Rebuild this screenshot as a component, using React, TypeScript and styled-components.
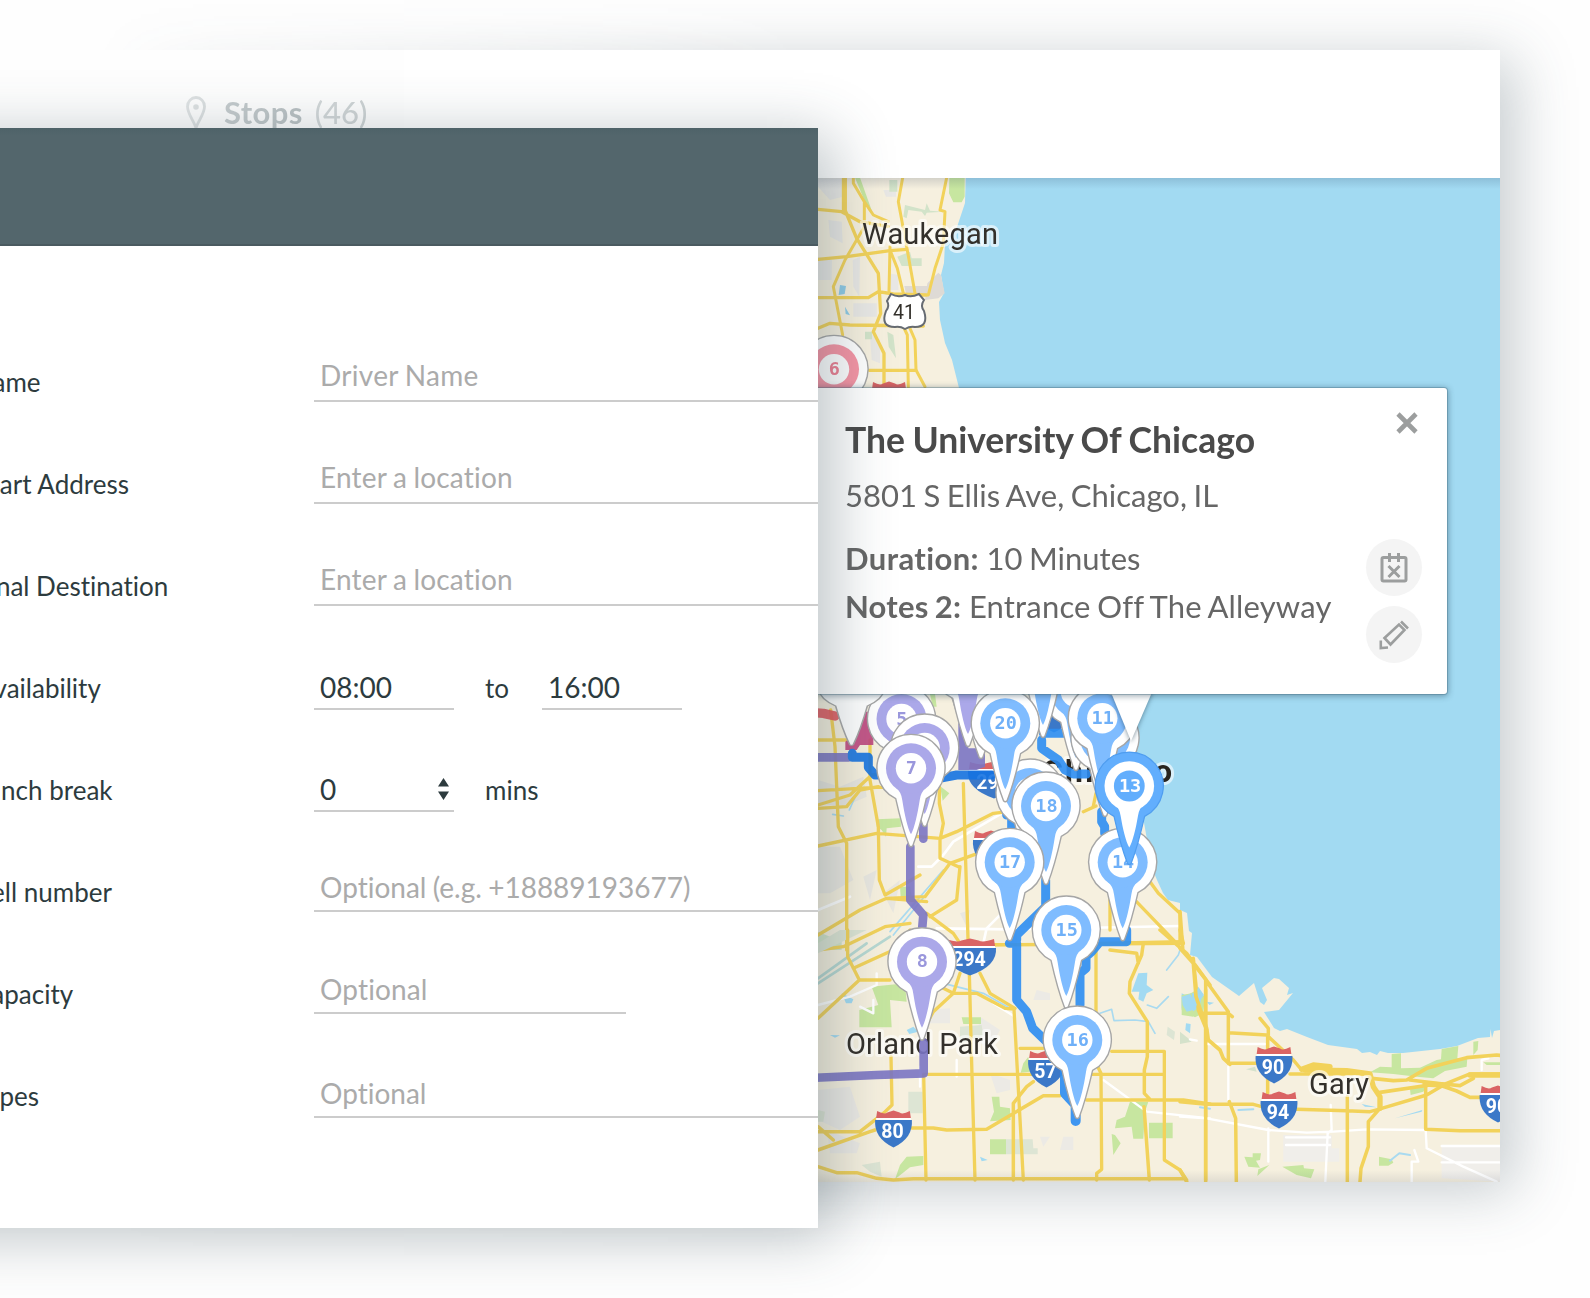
import React from "react";
import styled, { createGlobalStyle, css } from "styled-components";

const GlobalStyle = createGlobalStyle`
  * { box-sizing: border-box; }
  html, body { margin: 0; padding: 0; background: #fefefe; }
  body {
    font-family: Lato, "Liberation Sans", sans-serif;
    font-variant-ligatures: none;
    overflow: hidden;
  }
`;

const Stage = styled.main`
  display: grid;
  width: 1590px;
  height: 1298px;
  overflow: hidden;
  background: #fefefe;
`;

const BackLayer = styled.section`
  grid-area: 1 / 1;
  display: flex;
  width: 1590px;
  padding: 50px 90px 116px;
  mask-image: linear-gradient(to right, transparent 90px, rgba(0, 0, 0, 0.3) 215px, rgba(0, 0, 0, 0.42) 340px, #000 800px);
`;

const RouteCard = styled.div`
  flex: 1;
  display: flex;
  flex-direction: column;
  background: #fff;
  box-shadow: 15px 9px 56px rgba(55, 75, 85, 0.28);
`;

const CardHeader = styled.header`
  display: flex;
  align-items: center;
  height: 128px;
  padding: 0 0 5px 96px;
`;

const StopsTitle = styled.div`
  display: flex;
  align-items: center;
  font-size: 31px;
  color: #4c6066;
  svg { margin-top: 2px; }
  strong { font-weight: 700; letter-spacing: 0.4px; margin: 0 12px 0 18px; }
  span { opacity: 0.6; font-weight: 500; }
`;

const MapArea = styled.div`
  position: relative;
  flex: 1;
  svg.map { display: block; width: 1410px; height: 1004px; }
`;

const Popup = styled.article`
  position: absolute;
  left: 700px;
  top: 210px;
  width: 657px;
  height: 306px;
  display: flex;
  padding: 0 25px 0 55px;
  background: #fff;
  border-radius: 3px;
  box-shadow: 0 0 0 1px rgba(70, 110, 130, 0.35), 0 1px 6px 1px rgba(30, 60, 80, 0.45);
`;

const PopupText = styled.div`
  flex: 1;
  padding-top: 30px;
  white-space: nowrap;
`;

const PopupTitle = styled.h2`
  margin: 0;
  font-size: 35.5px;
  line-height: 44px;
  font-weight: 700;
  word-spacing: -1.2px;
  color: #4a4a4a;
`;

const PopupLine = styled.p<{ $gap: number; $track?: number }>`
  margin: ${(p) => p.$gap}px 0 0;
  font-size: 31px;
  line-height: 38px;
  letter-spacing: ${(p) => p.$track ?? 0}px;
  word-spacing: -1.4px;
  color: #666;
`;

const Term = styled.strong<{ $track: number }>`
  font-weight: 700;
  letter-spacing: ${(p) => p.$track}px;
  margin-right: 1px;
`;

const PopupActions = styled.div`
  display: flex;
  flex-direction: column;
  align-items: center;
  width: 56px;
`;

const CloseButton = styled.button`
  display: grid;
  place-items: center;
  width: 30px;
  height: 30px;
  margin: 20px 0 101px 26px;
  padding: 0;
  border: 0;
  background: none;
`;

const RoundButton = styled.button`
  display: grid;
  place-items: center;
  width: 56px;
  height: 57px;
  flex: none;
  margin-bottom: 10px;
  padding: 0;
  border: 0;
  border-radius: 50%;
  background: #f4f4f4;
`;

const Dialog = styled.section`
  grid-area: 1 / 1;
  z-index: 1;
  width: 938px;
  height: 1100px;
  margin: 128px 0 0 -120px;
  background: #fff;
  box-shadow: 15px 8px 58px rgba(55, 75, 85, 0.33);
`;

const DialogHeader = styled.header`
  height: 118px;
  background: linear-gradient(#4e6268, #53666c 8px);
  border-bottom: 2px solid #4a5a60;
`;

const Form = styled.form`
  padding: 54px 0 0 120px;
`;

const Row = styled.div`
  display: flex;
  align-items: flex-end;
  height: 102px;
  color: #2d3b3e;
`;

const Label = styled.label<{ $shift?: number }>`
  flex: none;
  width: ${(p) => 314 + (p.$shift ?? 26)}px;
  margin-left: ${(p) => -(p.$shift ?? 26)}px;
  margin-bottom: 4px;
  font-size: 26px;
  line-height: 32px;
  white-space: nowrap;
`;

const Field = styled.div<{ $width?: number; $pad: number; $drop?: boolean; $filled?: boolean; $track?: number }>`
  display: flex;
  align-items: center;
  justify-content: space-between;
  ${(p) => (p.$width ? css`width: ${p.$width}px;` : css`flex: 1;`)}
  margin-bottom: ${(p) => (p.$drop ? -2 : 0)}px;
  padding: 0 5px ${(p) => p.$pad}px 6px;
  border-bottom: 2px solid #ccc;
  font-size: 28px;
  line-height: 34px;
  letter-spacing: ${(p) => p.$track ?? 0}px;
  word-spacing: -0.9px;
  color: ${(p) => (p.$filled ? "#2d3b3e" : "#ababab")};
`;

const Unit = styled.span`
  width: 88px;
  padding-left: 31px;
  margin-bottom: 4px;
  font-size: 26px;
  line-height: 32px;
`;

const road = { fill: "none", strokeLinejoin: "round" as const, strokeLinecap: "round" as const };
const YELLOW = "#f2d25a";

function Roads({ d, w = 10, color = YELLOW }: { d: string; w?: number; color?: string }) {
  return <path {...road} d={d} strokeWidth={w} stroke={color} />;
}

const PIN_OUTLINE =
  "M-15.3 30.4 A34 34 0 1 1 15.3 30.4 C12 45 7 64 1.8 77.5 Q0 79.5 -1.8 77.5 C-7 64 -12 45 -15.3 30.4Z";
const STEM = "M-15 19.5 Q-9.5 24 -8.7 32 C-6.5 46 -3.5 60 0 66 C3.5 60 6.5 46 8.7 32 Q9.5 24 15 19.5Z";

type PinProps = { x: number; y: number; label?: string; tone?: "blue" | "purple" | "pink" | "white" };
const TONES = { blue: "#7fbcff", purple: "#aba8e9", pink: "#f795a5", white: "#fff" };
const INK = { blue: "#6fb0f8", purple: "#9a97dc", pink: "#ee7f92", white: "#fff" };

const PinText = styled.text`
  font: 700 18.5px "DejaVu Sans Mono", monospace;
  text-anchor: middle;
`;

function Pin({ x, y, label, tone = "blue" }: PinProps) {
  return (
    <g transform={`translate(${x} ${y})`}>
      <path d={PIN_OUTLINE} fill="#fff" stroke="#a6a6a6" strokeWidth="1.4" />
      <path d={STEM} fill={TONES[tone]} />
      <circle r="25" fill={TONES[tone]} />
      <circle r="15.2" fill="#fff" />
      {label && <PinText x=".4" y="5.5" fill={INK[tone]}>{label}</PinText>}
    </g>
  );
}

function ActivePin({ x, y, label }: PinProps) {
  return (
    <g transform={`translate(${x} ${y})`}>
      <path d={PIN_OUTLINE} fill="#62aefd" stroke="#4f9df0" strokeWidth="1.2" />
      <path d={STEM} fill="#fff" transform="scale(1 .93)" />
      <circle r="24.8" fill="#fff" />
      <circle r="15.4" fill="#62aefd" />
      <PinText x=".8" y="5.5" fill="#fff">{label}</PinText>
    </g>
  );
}

const ShieldText = styled.text`
  font: 700 19.5px Roboto, sans-serif;
  text-anchor: middle;
  fill: #fff;
`;

function Interstate({ x, y, label, w = 36.7 }: { x: number; y: number; label: string; w?: number }) {
  const h = w / 2;
  return (
    <g transform={`translate(${x} ${y})`}>
      <path
        d={`M${-h + 2} -18 Q${-h / 2} -14 ${-h / 3} -16.5 L0 -18.5 L${h / 3} -16.5 Q${h / 2} -14 ${h - 2} -18 L${h - 1} -11 H${-h + 1}Z`}
        fill="#da6464"
      />
      <path d={`M${-h} -9 H${h} Q${h + 1.5} 9 0 18.5 Q${-h - 1.5} 9 ${-h} -9Z`} fill="#3b78c8" />
      <path d={`M${-h + 1} -10 H${h - 1}`} stroke="#fff" strokeWidth="2" />
      {label && <ShieldText x="-1" y="9">{label}</ShieldText>}
    </g>
  );
}

const Place = styled.text`
  font: 400 29px Roboto, sans-serif;
  fill: #33302b;
  stroke: rgba(255, 255, 255, 0.6);
  stroke-width: 6px;
  stroke-linejoin: round;
  paint-order: stroke;
`;

const Pointer = styled.path`
  fill: #fff;
  filter: drop-shadow(0 1px 2.5px rgba(40, 70, 90, 0.6));
`;

function MapDrawing() {
  return (
    <svg className="map" viewBox="90 178 1410 1004">
      <defs>
        <linearGradient id="topShade" x1="0" y1="0" x2="0" y2="1">
          <stop offset="0" stopColor="#235" stopOpacity=".16" />
          <stop offset="1" stopColor="#235" stopOpacity="0" />
        </linearGradient>
        <linearGradient id="bottomShade" x1="0" y1="1" x2="0" y2="0">
          <stop offset="0" stopColor="#235" stopOpacity=".1" />
          <stop offset="1" stopColor="#235" stopOpacity="0" />
        </linearGradient>
      </defs>
      <rect x="90" y="178" width="1410" height="1004" fill="#a2daf2" />
      <path
        fill="#f6f0df"
        d="M700 178 H965.7 L965 203 L957 227 L945 243 L944 263 L941 275 L944 293 L939 302 L940 320 L945 343 L952 360 L959 388 L1000 480 L1050 560 L1090 640 L1115 694 L1125 740 L1140 800 L1152 868 L1157 880 L1163 893 L1168 900 L1180 903 L1180 910 L1187 913 L1189 931 L1192 933 L1190 955 L1197 957 L1212 977 L1239 996 L1254 983 L1260 1002 L1264 1005 L1267 1000 L1262 988 L1274 978 L1279 979 L1289 988 L1287 995 L1293 993 L1279 1010 L1264 1012 L1274 1028 L1280 1031 L1287 1029 L1307 1037 L1328 1045 L1357 1049 L1362 1053 L1370 1052 L1377 1055 L1380 1051 L1388 1053 L1403 1053 L1440 1049 L1457 1046 L1478 1038 L1490 1037 L1490.5 1029 L1492 1038 L1494 1031 L1500 1030 V1182 H700Z"
      />

      {/* Waukegan and the north shore */}
      <g transform="translate(810 30) scale(.33333)">
        <path fill="#e9e8e5" d="M24 445H98V500L60 510L24 470ZM55 570L95 575L98 640L60 620ZM24 680L66 690L65 750H24ZM128 690L150 680L148 800L130 770ZM130 820H200V860H130ZM235 730L265 735V780H240ZM220 480H258V500H228ZM180 910L210 930V1000L185 990Z" />
        <path fill="#d2e3c9" d="M238 450H262V485H238ZM262 680L300 665L305 685H335V708H275ZM232 905L250 915L258 985L236 950ZM165 905H186V928H165ZM285 525L345 540L350 520L360 542L400 545L350 548L345 558L335 545L295 540L290 565L280 560Z" />
        <path fill="#c7e6a0" d="M135 443H150L190 555L175 540ZM418 443H464V500L455 517H430L417 490Z" />
        <path fill="#dedad5" d="M283 768H352V800H290ZM352 760L385 728L393 735L404 790L385 805L345 810Z" />
        <path fill="#8fcbe6" d="M90 765L108 768L104 792L86 795ZM105 830L120 856L107 852Z" />
        <Roads d="M24 538L95 545L150 575L235 590M24 688L110 680L240 662L290 658M24 803H175L205 785L250 792L350 795M24 895L60 880L120 885L340 888M178 1021H318M105 443V540L140 625L205 730L212 850L190 905L222 970V1073" />
        <Roads d="M130 443V460L163 515L190 555L235 575M163 515V590L105 690L70 770L98 915M278 443L265 515L290 650L315 790M410 443L390 540L405 545L400 640L375 715L355 795M240 650L237 785M240 660L262 715L280 790M278 885L292 915L295 1073M300 895L315 930L318 1020L345 1070" w={9} />
        <Roads d="M103 443V545" w={15} />
      </g>

      {/* western and central suburbs */}
      <g transform="translate(810 680) scale(.33333)">
        <path fill="#e9e7e0" d="M24 300L90 320L160 290L170 350L100 380L24 370ZM24 500L90 500L130 600L60 640H24ZM160 590L200 570L180 660ZM220 640L270 600L250 700ZM450 700L480 690L470 740Z" />
        <path fill="#c7e6a0" d="M360 42H375L380 80H368ZM200 418L272 415L273 440L230 445L228 470L215 450L200 440ZM390 318L418 340L398 362ZM270 620H300L305 650H272Z" />
        <path fill="#d2e3c9" d="M24 755L60 770L95 770V810H24Z" />
        <Roads color="#fff" w={8} d="M325 560H365L400 525L430 485L575 400M380 745L600 748L1110 738M520 790L530 745L575 700M24 690L120 650" />
        <Roads color="#a9daf0" w={5} d="M250 765L415 560M240 755L400 570M118 390L140 340M68 403L100 408" />
        <Roads d="M24 180H120M62 90L75 200L85 440L110 490V810M24 498L200 460L390 475L440 455L550 400L680 385M820 395L858 378M24 375L120 345L185 285L300 270M24 332L200 322H300M24 385L110 380L150 330L205 320M180 180V300L205 440L208 600L225 645L330 585M388 300V370L400 430L390 480V535L445 560M460 310L465 480L475 810" />
        <Roads d="M24 765L150 690L230 655L345 650L420 550L560 500M230 655L350 665M360 710L440 660L450 560M24 810L100 800L225 740L300 730M350 700L430 760L450 790M300 42V80M858 340L850 378M900 655V750M970 655L1100 790M1020 605L1045 640L1110 700V790M480 795L1120 790" />
      </g>

      {/* southern suburbs */}
      <g transform="translate(810 930) scale(.33333)">
        <path fill="#eceae5" d="M24 480L120 470L150 560L90 600L24 570ZM50 600L150 640L140 670H60ZM350 240L420 235V280H350ZM510 260L570 300L540 360L500 330ZM540 430L600 450V480L560 490ZM680 180L720 190V210H670ZM690 620H720L700 650ZM760 620H790V660H750Z" />
        <path fill="#c7e6a0" d="M185 170L285 160L290 215L240 210L245 292H148V240L205 225ZM455 262H513V282H460ZM255 748L270 705L290 680L340 678L340 705L300 712ZM540 628H588V673H540ZM545 500H568L570 530L600 535L602 570L540 574L552 545ZM915 595L920 570L945 560L960 515H1015L1005 545L1000 626H970L965 590ZM1017 578H1088V625H1017ZM905 612L915 615L932 640L910 675ZM640 400L655 380L660 425L632 428Z" />
        <path fill="#dde5d4" d="M24 70L170 0H90L24 40ZM450 290L515 285L520 320L450 340ZM295 485H338V550H295ZM588 628H668L670 655H683V673H588ZM24 540L45 545L40 575L24 575ZM1073 290L1095 305L1092 330L1070 315ZM1115 310L1135 325L1138 335L1112 335ZM155 705L210 695L215 740L180 725Z" />
        <path fill="#a2daf2" d="M985 130L1012 128L1010 165L1030 180L1010 190L1000 215L985 208L988 185L965 185ZM95 190L130 208L125 220L108 220ZM60 315L90 316L75 323ZM290 300L310 290L325 305L298 312ZM510 680L533 690L515 694Z" />
        <path fill="#c7e6a0" d="M1115 205L1160 180L1185 200L1180 250L1155 262L1115 240Z" />
        <path fill="#a2daf2" d="M1115 190L1135 200L1145 190L1178 190L1168 230L1135 255L1115 235Z" />
        <Roads color="#b7d8d2" w={8} d="M24 145L170 40M24 160L240 20" />
        <Roads color="#a9daf0" w={5} d="M870 250L905 238L912 272L975 270L1015 275L1035 310M1012 225L1040 235L1075 200M1070 120L1105 75L1110 60M400 160L520 190L600 235" />
        <Roads color="#fff" w={7} d="M24 225L120 200L200 165V130M150 230L190 250V210M550 220L615 260M880 450L1010 545L1200 565M440 440V390M330 470V410" />
        <Roads d="M113 0V80L148 150H240M24 265L148 150M130 115L250 60L300 0M555 44H700L1115 35M478 130L485 400L495 750M510 130L540 190L615 235M400 175L430 190L500 190L585 235L612 237L640 750M430 190L370 245L340 300M430 190L450 130M345 433H1060M630 355H700M905 364H1063V690L1110 720L1130 750M858 45V400L873 430L875 718L860 730V750M341 433L348 750M243 380L246 525L220 550" />
        <Roads d="M24 590L70 630M24 605H150L220 550M24 660L180 605L195 600M305 594H370L410 600L530 598L700 497H750M830 510H1120L1200 522M610 750V520L650 470L670 455M24 710L80 728H140L200 745L250 750L310 746H1120M1002 530L1018 750M1000 40L995 75L960 155L958 190L1012 275V380L1003 420V490L1020 508M900 60L980 70L985 100M1110 0L1120 40M1050 0L1130 70L1200 165M1150 85L1165 240L1190 300M1187 180V750" w={10.5} />
      </g>

      {/* Gary and the Indiana shore */}
      <g transform="translate(1180 900) scale(.33333)">
        <path fill="#c7e6a0" d="M570 517L600 500L635 502V462L663 460V505L720 503L770 480L783 478L785 447L835 438L832 475L862 473L860 500L795 513L760 535L710 530L640 522ZM880 425L895 423L893 450L880 465ZM690 568L740 558L730 575L692 585ZM5 285L35 280L40 350L5 345ZM193 770L218 772V760H243L240 780L228 782L240 803L205 800ZM232 828L235 808L268 795ZM307 800L370 795L372 805L403 808L393 835L350 825ZM597 770L635 778L640 788L625 797H597ZM910 487H960V495H920Z" />
        <path fill="#d5e2cb" d="M0 395L35 425L0 432ZM198 508L225 500L230 515Z" />
        <path fill="#f0eeea" d="M310 705H455V745H478V785H310ZM785 735H960V845L785 835Z" />
        <path fill="#a2daf2" d="M5 290L30 282L40 300L55 260L72 285L40 330L20 335L8 315ZM18 370L32 372L30 400L16 390ZM80 305L102 308L88 315ZM545 612L590 622L555 620ZM645 655L727 630L725 635Z" />
        <Roads color="#a9daf0" w={6} d="M630 782L658 760L690 765M60 622L90 626M175 630L220 628" />
        <Roads color="#fff" w={7} d="M0 650L80 655L265 690L380 698L460 695L560 688L737 690L740 745L850 800L950 845M265 685V785M452 615L455 690L443 700L436 845M145 500V600M83 432H255M695 845V785H715L703 750M785 738H960M785 787H960M318 712H450M318 735H450M905 510V480L925 475M30 418L50 422" />
        <Roads d="M77 240V845M0 605L80 613H220L245 620M350 628L500 632L570 635L595 628L740 585L800 550L870 522H960M62 340H145L157 350M80 245L145 335V490H230M145 398L260 405L340 480L365 510M330 522H570M263 405V580M240 355L265 385V405M148 605L167 655L169 845M502 590V845M600 625L565 665V740L543 805L540 845M737 555V688L840 692H960" w={10.5} />
        <Roads d="M0 145L40 190L78 240M0 35L8 145M40 190L48 290L80 385L85 420L120 450L130 475L150 493M0 810L20 845M575 535L640 542L680 540L740 505L860 473L950 465L960 466M600 577L770 552L830 573L870 592H900M690 540L790 552L840 557L880 535" w={11} />
        <Roads d="M365 508L400 495L450 500L375 510L500 512L570 522L580 560L600 590L600 625M735 552L790 555M870 525H960" w={16} />
      </g>

      <Place x="862" y="243.5" textLength="136">Waukegan</Place>
      <Place x="846" y="1054" textLength="152">Orland Park</Place>
      <Place x="1309" y="1094" textLength="60">Gary</Place>
      <text x="1042" y="782" textLength="130" fontFamily="Roboto" fontWeight="700" fontSize="32" fill="#28241e" stroke="#fff" strokeOpacity=".6" strokeWidth="6" paintOrder="stroke" strokeLinejoin="round">Chicago</text>

      <path d="M891 294 L887 301 Q890 306 886 311 Q880 327 895 327 Q900 326 905 329 Q910 326 915 327 Q929 327 924 311 Q920 306 924 300 L919 294 Q911 298 905 295 Q898 298 891 294Z" fill="#fff" stroke="#666b72" strokeWidth="2" />
      <text x="904" y="319" textAnchor="middle" fontFamily="Roboto" fontWeight="400" fontSize="19.5" fill="#33302b">41</text>

      <Interstate x={889} y={400} label="" w={36} />
      <Interstate x={994} y={780} label="294" w={52} />
      <Interstate x={991} y={849} label="" w={36} />
      <Interstate x={970} y={957} label="294" w={52} />
      <Interstate x={1054} y={714} label="" w={40} />
      <Interstate x={1046.5} y={1069} label="57" />
      <Interstate x={893.5} y={1129} label="80" />
      <Interstate x={1274} y={1065} label="90" />
      <Interstate x={1279} y={1110} label="94" />
      <Interstate x={1498} y={1104} label="90" />

      {/* planned routes */}
      <g transform="translate(810 680) scale(.33333)" opacity=".9">
        <Roads color="#e0565d" w={28} d="M10 98L40 100L75 108" />
        <path fill="#bf477f" d="M165 95H190V195H150L140 210H106V185L130 165Z" />
        <path fill="#7b75c4" d="M445 130H475V205H525V260L500 270H445Z" />
        <Roads color="#7b75c4" w={26} d="M0 232H115M340 430V476M301 500V660L340 705L337 740M341 1088V1180L200 1185L0 1194" />
        <Roads color="#1673e2" w={27} d="M127 220V232H175V262L195 285H240M400 293L440 285H545" />
        <Roads color="#2c8df2" w={27} d="M695 180V205L745 240L765 270L790 282H830M700 160H760M875 395V425L884 440V460M707 600V680L620 765V780M598 790H620V960L650 995L668 1045L710 1085M950 750V785H870L845 815L828 830V865L810 880V975M590 330V405M605 420V460" />
        <Roads color="#2c8df2" w={30} d="M765 1150V1240L797 1275V1323" />
      </g>

      {/* stops */}
      <Pin x={834} y={369.3} label="6" tone="pink" />
      <Pin x={960} y={639} tone="purple" />
      <Pin x={981} y={680} tone="purple" />
      <Pin x={968} y={668} tone="purple" />
      <Pin x={1076} y={692} />
      <Pin x={1043} y={659} />
      <Pin x={901.5} y={719} label="5" tone="purple" />
      <g transform="translate(851.5 681) scale(1.04 .82)">
        <path d={PIN_OUTLINE} fill="#fff" stroke="#a6a6a6" strokeWidth="1.5" />
      </g>
      <Pin x={924.7} y={748} tone="purple" />
      <Pin x={911} y={768.3} label="7" tone="purple" />
      <Pin x={1030} y={793} />
      <Pin x={1005.3} y={723.3} label="20" />
      <Pin x={1105} y={738} />
      <Pin x={1102.3} y={718.3} label="11" />
      <Pin x={1046} y={806} label="18" />
      <Pin x={1009.7} y={862.3} label="17" />
      <Pin x={1122.7} y={862.3} label="14" />
      <Pin x={1066.3} y={930} label="15" />
      <Pin x={1077.3} y={1040} label="16" />
      <Pin x={922} y={961.7} label="8" tone="purple" />
      <Pointer d="M1110 690H1153L1131 741Z" />
      <ActivePin x={1129.3} y={786} label="13" />

      <rect x="90" y="178" width="1410" height="11" fill="url(#topShade)" />
      <rect x="90" y="1170" width="1410" height="12" fill="url(#bottomShade)" />
    </svg>
  );
}

const iconStroke = { fill: "none", stroke: "#9c9e9e" };

function App() {
  return (
    <>
      <GlobalStyle />
      <Stage>
        <BackLayer>
          <RouteCard>
            <CardHeader>
              <StopsTitle>
                <svg width="20" height="34" viewBox="0 0 20 34" fill="none" stroke="#4c6066" strokeWidth="2.8" opacity=".7">
                  <path d="M10 32C8 25 1.5 18 1.5 10.5A8.5 9 0 0 1 18.5 10.5C18.5 18 12 25 10 32Z" />
                  <circle cx="10" cy="11" r="1.4" fill="#4c6066" />
                </svg>
                <strong>Stops</strong>
                <span>(46)</span>
              </StopsTitle>
            </CardHeader>
            <MapArea>
              <MapDrawing />
              <Popup>
                <PopupText>
                  <PopupTitle>The University Of Chicago</PopupTitle>
                  <PopupLine $gap={14}>5801 S Ellis Ave, Chicago, IL</PopupLine>
                  <PopupLine $gap={25}><Term $track={0.4}>Duration:</Term> 10 Minutes</PopupLine>
                  <PopupLine $gap={10} $track={0.18}><Term $track={0.2}>Notes 2:</Term> Entrance Off The Alleyway</PopupLine>
                </PopupText>
                <PopupActions>
                  <CloseButton type="button" aria-label="Close">
                    <svg width="22" height="22" viewBox="0 0 22 22" {...iconStroke} strokeWidth="4.6">
                      <path d="M2 2L20 20M20 2L2 20" />
                    </svg>
                  </CloseButton>
                  <RoundButton type="button" aria-label="Unschedule">
                    <svg width="28" height="30" viewBox="0 0 28 30" {...iconStroke} strokeWidth="3">
                      <rect x="2" y="4.5" width="24" height="23.5" rx="1.5" />
                      <path d="M9.5 0V9M18.5 0V9M8.5 13L19.5 24M19.5 13L8.5 24" />
                    </svg>
                  </RoundButton>
                  <RoundButton type="button" aria-label="Edit">
                    <svg width="30" height="30" viewBox="0 0 30 30" {...iconStroke} strokeWidth="2.6">
                      <path d="M5.5 18L20 4.5L25.5 10L11.5 24.5ZM22 1.5L29 8.5M1.8 20.5V28L9 27.5" />
                    </svg>
                  </RoundButton>
                </PopupActions>
              </Popup>
            </MapArea>
          </RouteCard>
        </BackLayer>

        <Dialog>
          <DialogHeader />
          <Form>
            <Row>
              <Label $shift={27}>Name</Label>
              <Field $pad={8} $track={0.3}>Driver Name</Field>
            </Row>
            <Row>
              <Label $shift={23}>Start Address</Label>
              <Field $pad={8} $track={0.18}>Enter a location</Field>
            </Row>
            <Row>
              <Label $shift={25}>Final Destination</Label>
              <Field $pad={8} $track={0.18}>Enter a location</Field>
            </Row>
            <Row>
              <Label $shift={23}>Availability</Label>
              <Field $width={140} $pad={4} $drop $filled>08:00</Field>
              <Unit>to</Unit>
              <Field $width={140} $pad={4} $drop $filled>16:00</Field>
            </Row>
            <Row>
              <Label>Lunch break</Label>
              <Field $width={140} $pad={4} $drop $filled>
                0
                <svg width="11" height="22" viewBox="0 0 11 22" fill="#2d3b3e">
                  <path d="M5.5 0L11 8.5H0ZM5.5 22L0 13.5H11Z" />
                </svg>
              </Field>
              <Unit>mins</Unit>
            </Row>
            <Row>
              <Label>Cell number</Label>
              <Field $pad={6}>Optional (e.g. +18889193677)</Field>
            </Row>
            <Row>
              <Label>Capacity</Label>
              <Field $width={312} $pad={6} $track={0.15}>Optional</Field>
            </Row>
            <Row>
              <Label $shift={27}>Types</Label>
              <Field $pad={6} $drop>Optional</Field>
            </Row>
          </Form>
        </Dialog>
      </Stage>
    </>
  );
}

export default App;
